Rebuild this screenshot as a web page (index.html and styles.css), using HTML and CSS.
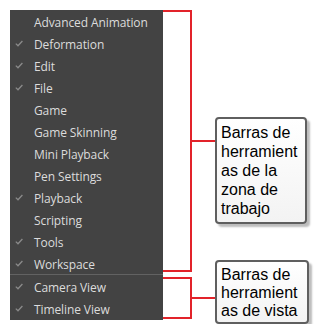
FILE: index.html
```html
<!DOCTYPE html>
<html>
<head>
<meta charset="utf-8">
<link rel="stylesheet" href="styles.css">
</head>
<body>
<div class="page">
  <div class="menu">
    <div class="item"><span class="chk"></span><span class="label">Advanced Animation</span></div>
    <div class="item"><span class="chk"><svg viewBox="0 0 8 7" width="8" height="7"><polyline points="0.8,3.6 3,5.8 7.4,1" /></svg></span><span class="label">Deformation</span></div>
    <div class="item"><span class="chk"><svg viewBox="0 0 8 7" width="8" height="7"><polyline points="0.8,3.6 3,5.8 7.4,1" /></svg></span><span class="label">Edit</span></div>
    <div class="item"><span class="chk"><svg viewBox="0 0 8 7" width="8" height="7"><polyline points="0.8,3.6 3,5.8 7.4,1" /></svg></span><span class="label">File</span></div>
    <div class="item"><span class="chk"></span><span class="label">Game</span></div>
    <div class="item"><span class="chk"></span><span class="label">Game Skinning</span></div>
    <div class="item"><span class="chk"></span><span class="label">Mini Playback</span></div>
    <div class="item"><span class="chk"></span><span class="label">Pen Settings</span></div>
    <div class="item"><span class="chk"><svg viewBox="0 0 8 7" width="8" height="7"><polyline points="0.8,3.6 3,5.8 7.4,1" /></svg></span><span class="label">Playback</span></div>
    <div class="item"><span class="chk"></span><span class="label">Scripting</span></div>
    <div class="item"><span class="chk"><svg viewBox="0 0 8 7" width="8" height="7"><polyline points="0.8,3.6 3,5.8 7.4,1" /></svg></span><span class="label">Tools</span></div>
    <div class="item"><span class="chk"><svg viewBox="0 0 8 7" width="8" height="7"><polyline points="0.8,3.6 3,5.8 7.4,1" /></svg></span><span class="label">Workspace</span></div>
    <div class="divider"></div>
    <div class="item"><span class="chk"><svg viewBox="0 0 8 7" width="8" height="7"><polyline points="0.8,3.6 3,5.8 7.4,1" /></svg></span><span class="label">Camera View</span></div>
    <div class="item"><span class="chk"><svg viewBox="0 0 8 7" width="8" height="7"><polyline points="0.8,3.6 3,5.8 7.4,1" /></svg></span><span class="label">Timeline View</span></div>
  </div>
  <div class="notes">
    <div class="group group-work">
      <div class="bracket bracket-work"></div>
      <div class="stub stub-work"></div>
      <div class="callout callout-work">Barras de herramientas de la zona de trabajo</div>
    </div>
    <div class="group group-view">
      <div class="bracket bracket-view"></div>
      <div class="stub stub-view"></div>
      <div class="callout callout-view">Barras de herramientas de vista</div>
    </div>
  </div>
</div>
</body>
</html>
```

FILE: styles.css
```css
html, body {
  margin: 0;
  padding: 0;
  background: #ffffff;
}

.page {
  display: flex;
  align-items: flex-start;
  padding: 10px 0 0 10px;
}

.menu {
  width: 153px;
  height: 310px;
  box-sizing: border-box;
  background: #434343;
  display: flex;
  flex-direction: column;
  font-family: "Open Sans", "Noto Sans", sans-serif;
  font-size: 12px;
  color: #dcdcdc;
}

.item {
  height: 22px;
  display: flex;
  align-items: center;
}

.chk {
  width: 24px;
  height: 22px;
  display: flex;
  align-items: center;
  padding: 1px 0 0 5px;
  box-sizing: border-box;
}

.chk svg {
  display: block;
  fill: none;
  stroke: #8a8a8a;
  stroke-width: 1.3;
}

.label {
  white-space: nowrap;
  letter-spacing: -0.1px;
  padding-top: 2px;
}

.divider {
  height: 1px;
  background: #626262;
}

.notes {
  display: flex;
  flex-direction: column;
}

.group {
  display: flex;
  align-items: flex-start;
}

.bracket {
  width: 27px;
  border: 2px solid #e2232a;
  border-left: none;
}

.bracket-work {
  height: 258px;
}

.group-view {
  margin-top: -12px;
}

.bracket-view {
  margin-top: 17px;
  height: 38px;
}

.stub {
  width: 23px;
  height: 2px;
  background: #e2232a;
}

.stub-work {
  margin-top: 130px;
}

.stub-view {
  margin-top: 37px;
}

.callout {
  box-sizing: border-box;
  border: 2px solid #5f5f5f;
  border-radius: 4px;
  background: linear-gradient(#ffffff, #f3f3f3);
  box-shadow: 3px 3px 2px #bdbdbd;
  font-family: "Liberation Sans", Arial, sans-serif;
  font-size: 16px;
  color: #000;
  overflow-wrap: anywhere;
}

.callout-work {
  margin-top: 107px;
  width: 92px;
  line-height: 19px;
  padding: 4px 4px 4px 4px;
}

.callout-view {
  width: 94px;
  line-height: 18px;
  padding: 4px 4px 2px 4px;
}
```
